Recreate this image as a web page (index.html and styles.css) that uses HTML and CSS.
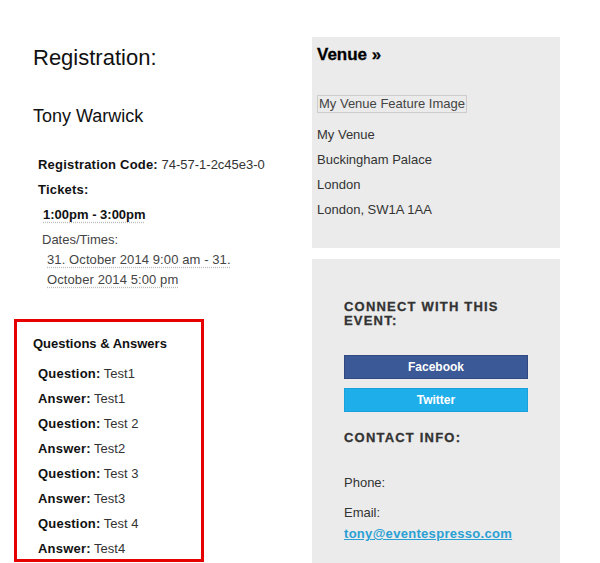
FILE: index.html
```html
<!DOCTYPE html>
<html>
<head>
<meta charset="utf-8">
<link rel="stylesheet" href="styles.css">
</head>
<body>
<div class="page">
  <div class="main">
    <h1 class="title">Registration:</h1>
    <h2 class="name">Tony Warwick</h2>
    <div class="row code"><b>Registration Code:</b> 74-57-1-2c45e3-0</div>
    <div class="row tickets"><b>Tickets:</b></div>
    <div class="row ticket-time"><span class="abbr">1:00pm - 3:00pm</span></div>
    <div class="dates">
      <div class="dates-label">Dates/Times:</div>
      <div class="dates-value"><span class="abbr">31. October 2014 9:00 am - 31. October 2014 5:00 pm</span></div>
    </div>
    <div class="qa">
      <div class="qa-title">Questions &amp; Answers</div>
      <div class="qa-row"><b>Question:</b> Test1</div>
      <div class="qa-row"><b>Answer:</b> Test1</div>
      <div class="qa-row"><b>Question:</b> Test 2</div>
      <div class="qa-row"><b>Answer:</b> Test2</div>
      <div class="qa-row"><b>Question:</b> Test 3</div>
      <div class="qa-row"><b>Answer:</b> Test3</div>
      <div class="qa-row"><b>Question:</b> Test 4</div>
      <div class="qa-row"><b>Answer:</b> Test4</div>
    </div>
  </div>
  <div class="sidebar">
    <div class="box venue">
      <div class="venue-title">Venue »</div>
      <div class="feature">My Venue Feature Image</div>
      <div class="addr">My Venue</div>
      <div class="addr">Buckingham Palace</div>
      <div class="addr">London</div>
      <div class="addr">London, SW1A 1AA</div>
    </div>
    <div class="box connect">
      <div class="caps">CONNECT WITH THIS EVENT:</div>
      <div class="btn fb">Facebook</div>
      <div class="btn tw">Twitter</div>
      <div class="caps contact">CONTACT INFO:</div>
      <div class="info phone">Phone:</div>
      <div class="info">Email:</div>
      <a class="mail" href="#">tony@eventespresso.com</a>
    </div>
  </div>
</div>
</body>
</html>
```
FILE: styles.css
```css
html, body {
  margin: 0;
  padding: 0;
  background: #fff;
}
body {
  font-family: "Liberation Sans", Arial, sans-serif;
  font-size: 13px;
  color: #333;
}
.page {
  display: flex;
  align-items: flex-start;
  padding: 37px 0 0 14px;
}
.main {
  width: 298px;
  flex: none;
}
.title {
  margin: 7px 0 0 19px;
  font-size: 22px;
  line-height: 28px;
  font-weight: normal;
  color: #111;
}
.name {
  margin: 33px 0 0 19px;
  font-size: 18px;
  line-height: 22px;
  font-weight: normal;
  color: #111;
}
.row {
  line-height: 25px;
  margin-left: 24px;
}
.row b {
  color: #111;
  letter-spacing: 0.2px;
}
.code {
  margin-top: 25px;
}
.ticket-time {
  margin-left: 29px;
  font-weight: bold;
  color: #111;
}
.abbr {
  text-decoration: underline dotted #bbb;
  text-underline-offset: 3px;
}
.dates {
  margin: 3px 0 0 28px;
  line-height: 20px;
  color: #444;
}
.dates-value {
  margin-left: 5px;
  width: 205px;
  letter-spacing: 0.1px;
}
.qa {
  margin-top: 29px;
  width: 190px;
  height: 243px;
  border: 3px solid #e60000;
  padding: 12px 0 0 16px;
  box-sizing: border-box;
  overflow: hidden;
}
.qa-title {
  font-weight: bold;
  line-height: 20px;
  color: #111;
  margin-bottom: 7px;
}
.qa-row {
  line-height: 25px;
  margin-left: 5px;
}
.qa-row b {
  color: #111;
  letter-spacing: 0.2px;
}
.sidebar {
  width: 248px;
  flex: none;
  display: flex;
  flex-direction: column;
  gap: 11px;
}
.box {
  background: #ebebeb;
}
.venue {
  height: 211px;
  box-sizing: border-box;
  padding: 8px 0 0 5px;
}
.venue-title {
  font-size: 17px;
  line-height: 20px;
  font-weight: bold;
  color: #000;
  -webkit-text-stroke: 0.3px #000;
}
.feature {
  display: inline-block;
  margin-top: 30px;
  margin-bottom: 9px;
  border: 1px solid #ccc;
  height: 16px;
  line-height: 16px;
  padding: 0 1px;
  color: #444;
}
.addr {
  line-height: 25px;
}
.connect {
  height: 320px;
  box-sizing: border-box;
  padding: 41px 0 0 32px;
}
.caps {
  font-weight: bold;
  line-height: 14px;
  letter-spacing: 1.2px;
  color: #333;
  width: 180px;
  -webkit-text-stroke: 0.3px #333;
}
.btn {
  width: 184px;
  height: 24px;
  box-sizing: border-box;
  line-height: 22px;
  text-align: center;
  color: #fff;
  font-weight: bold;
  font-size: 12px;
}
.fb {
  margin-top: 27px;
  background: #3b5897;
  border: 1px solid #31497f;
}
.tw {
  margin-top: 9px;
  background: #1eaeea;
  border: 1px solid #1aa0db;
}
.contact {
  margin-top: 19px;
  width: 200px;
}
.info {
  line-height: 20px;
}
.phone {
  margin-top: 28px;
  margin-bottom: 10px;
}
.mail {
  display: block;
  line-height: 22px;
  color: #2a9fd4;
  font-weight: bold;
  letter-spacing: 0.3px;
  text-decoration: underline;
}
```
